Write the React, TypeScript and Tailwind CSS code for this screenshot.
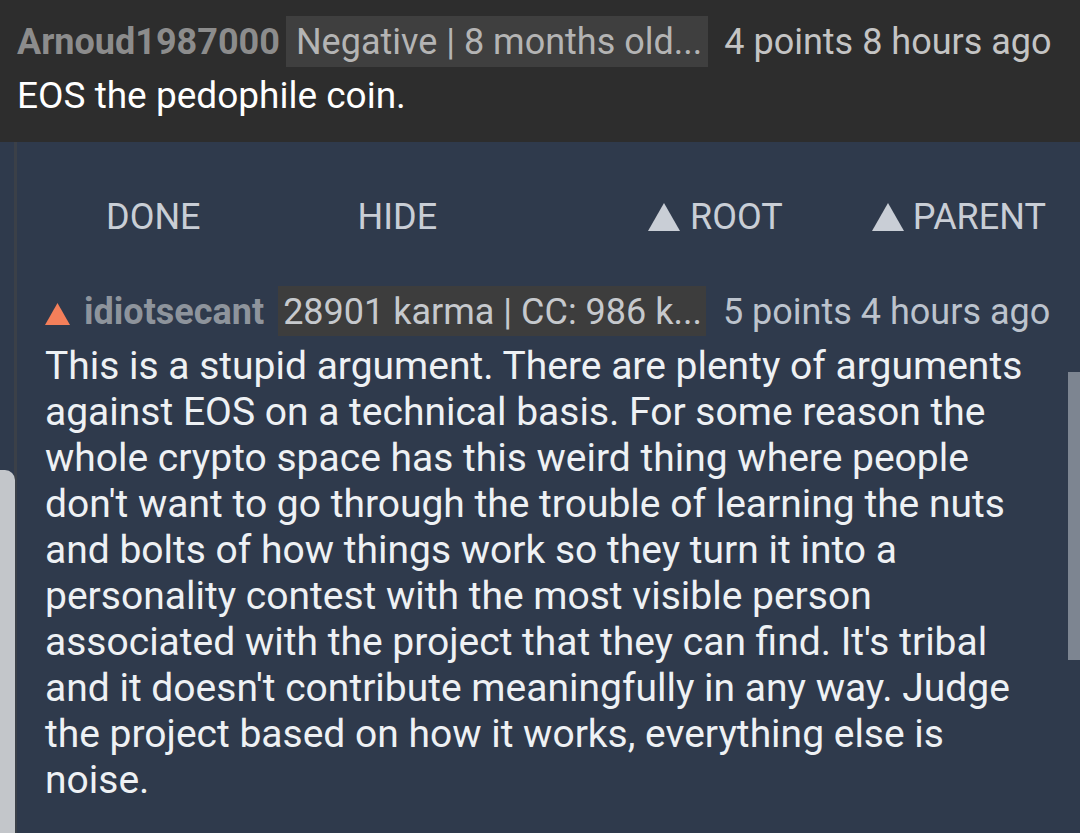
import React from "react";

const Tri = ({ className }: { className?: string }) => (
  <svg viewBox="0 0 32 28" className={className}>
    <polygon points="16,0 32,28 0,28" fill="currentColor" />
  </svg>
);

const lines = [
  "This is a stupid argument. There are plenty of arguments",
  "against EOS on a technical basis. For some reason the",
  "whole crypto space has this weird thing where people",
  "don't want to go through the trouble of learning the nuts",
  "and bolts of how things work so they turn it into a",
  "personality contest with the most visible person",
  "associated with the project that they can find. It's tribal",
  "and it doesn't contribute meaningfully in any way. Judge",
  "the project based on how it works, everything else is",
  "noise.",
];

export default function App() {
  return (
    <div
      className="relative w-[1080px] h-[833px] overflow-hidden bg-[#2f3a4c]"
      style={{ fontFamily: "Roboto, 'Noto Sans', sans-serif" }}
    >
      {/* parent comment */}
      <div className="bg-[#2d2d2d] h-[142px] pl-[17px] pt-[17px]">
        <div className="flex items-center h-[49px] text-[36px] leading-[49px] whitespace-nowrap">
          <span className="font-bold text-[#8c8c8c] pt-[2px]">Arnoud1987000</span>
          <span className="ml-[6px] bg-[#3f3f3f] text-[#b4b4b4] pl-[10px] pr-[6px] pt-[2px]">Negative | 8 months old...</span>
          <span className="ml-[16px] text-[#c4c4c4] pt-[2px]">4 points</span>
          <span className="ml-[9px] text-[#c4c4c4] pt-[2px]">8 hours ago</span>
        </div>
        <div className="mt-[7px] text-[37px] leading-[46px] text-white">EOS the pedophile coin.</div>
      </div>

      {/* child comment */}
      <div className="relative ml-[14px] border-l-[3px] border-[#3b4048] h-[691px]">
        <div className="flex items-center h-[150px] text-[36px] text-[#c9ced6] whitespace-nowrap">
          <span className="ml-[89px]">DONE</span>
          <span className="ml-[157px]">HIDE</span>
          <span className="ml-[211px] flex items-center">
            <Tri className="w-[32px] h-[28px] mr-[10px]" />
            ROOT
          </span>
          <span className="ml-[89px] flex items-center">
            <Tri className="w-[32px] h-[28px] mr-[9px]" />
            PARENT
          </span>
        </div>
        <div className="pl-[28px] -mt-[5px]">
          <div className="flex items-center h-[48px] text-[36px] leading-[48px] whitespace-nowrap">
            <Tri className="w-[25px] h-[22px] text-[#f47f5a] mr-[14px] mt-[6px]" />
            <span className="font-bold text-[#8e949c] pt-[2px]">idiotsecant</span>
            <span className="ml-[14px] bg-[#3d3d3d] text-[#c6c9cd] pl-[5px] pr-[4px] pt-[2px]">28901 karma | CC: 986 k...</span>
            <span className="ml-[17px] text-[#bcc3cd] pt-[2px]">5 points</span>
            <span className="ml-[9px] text-[#bcc3cd] pt-[2px]">4 hours ago</span>
          </div>
          <div className="mt-[8px] text-[39px] leading-[46px] text-[#eef1f4] whitespace-nowrap">
            {lines.map((l, i) => (
              <div key={i}>{l}</div>
            ))}
          </div>
        </div>
      </div>

      {/* scrollbars / overlays */}
      <div className="absolute left-0 top-[470px] w-[15px] h-[363px] bg-[#c3c6ca] rounded-tr-[10px]" />
      <div className="absolute right-0 top-[372px] w-[12px] h-[288px] bg-[#7d8591]" />
    </div>
  );
}
